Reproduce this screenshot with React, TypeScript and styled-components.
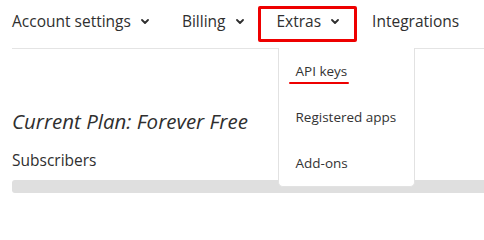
import * as React from 'react';
import styled, { createGlobalStyle } from 'styled-components';

const GlobalStyle = createGlobalStyle`
  html, body {
    margin: 0;
    padding: 0;
    background: #fff;
  }
  body {
    font-family: "Open Sans", "Noto Sans", sans-serif;
    color: #333;
    overflow: hidden;
  }
`;

const Page = styled.div`
  padding-left: 12px;
  width: 472px;
  height: 217px;
  overflow: hidden;
`;

const Nav = styled.nav`
  display: flex;
  gap: 33px;
  height: 48px;
  border-bottom: 1px solid #e4e4e4;
`;

const NavItem = styled.div<{ $highlight?: boolean }>`
  position: relative;
  display: flex;
  align-items: center;
  gap: 10px;
  padding-bottom: 7px;
  font-size: 15.5px;
  font-weight: 500;
  color: #2f2f2f;
  white-space: nowrap;
  cursor: pointer;

  ${(p) =>
    p.$highlight &&
    `
    &::after {
      content: '';
      position: absolute;
      top: 6px;
      height: 36px;
      left: -19px;
      right: -18px;
      box-sizing: border-box;
      border: 3px solid #ee0000;
      border-radius: 2px;
      pointer-events: none;
    }
  `}
`;

const Chevron = () => (
  <svg width="8" height="5" viewBox="0 0 8 5" style={{ marginTop: 1 }}>
    <path d="M1 1 L4 4 L7 1" fill="none" stroke="currentColor" strokeWidth="1.8" strokeLinecap="round" strokeLinejoin="round" />
  </svg>
);

const Dropdown = styled.ul`
  position: absolute;
  top: 48px;
  left: 1px;
  width: 137px;
  margin: 0;
  padding: 0;
  list-style: none;
  box-sizing: border-box;
  background: #fff;
  border: 1px solid #e2e2e2;
  border-top: none;
  border-radius: 0 0 5px 5px;
  z-index: 2;
`;

const MenuItem = styled.li`
  padding: 14px 17px 13px;
  font-size: 13.5px;
  font-weight: 500;
  line-height: 19px;
  color: #333;
`;

const Marked = styled.span`
  position: relative;

  &::after {
    content: '';
    position: absolute;
    left: -7px;
    right: -2px;
    bottom: -4px;
    height: 2px;
    background: #ee0000;
    border-radius: 1px;
  }
`;

const Content = styled.main`
  padding-top: 58px;
`;

const Title = styled.h1`
  margin: 0;
  font-size: 20.5px;
  font-style: italic;
  font-weight: 400;
  line-height: 28px;
  color: #2f2f2f;
`;

const Label = styled.h2`
  margin: 15px 0 0;
  font-size: 15.5px;
  font-weight: 500;
  line-height: 21px;
  color: #2f2f2f;
`;

const Bar = styled.div`
  margin-top: 9px;
  height: 13px;
  margin-right: -20px;
  background: #dfdfdf;
  border-radius: 3px;
`;

const App = () => {
  return (
    <Page>
      <GlobalStyle />
      <Nav>
        <NavItem>
          Account settings <Chevron />
        </NavItem>
        <NavItem>
          Billing <Chevron />
        </NavItem>
        <NavItem $highlight>
          Extras <Chevron />
          <Dropdown>
            <MenuItem>
              <Marked>API keys</Marked>
            </MenuItem>
            <MenuItem>Registered apps</MenuItem>
            <MenuItem>Add-ons</MenuItem>
          </Dropdown>
        </NavItem>
        <NavItem>Integrations</NavItem>
      </Nav>
      <Content>
        <Title>Current Plan: Forever Free</Title>
        <Label>Subscribers</Label>
        <Bar />
      </Content>
    </Page>
  );
};

export default App;
